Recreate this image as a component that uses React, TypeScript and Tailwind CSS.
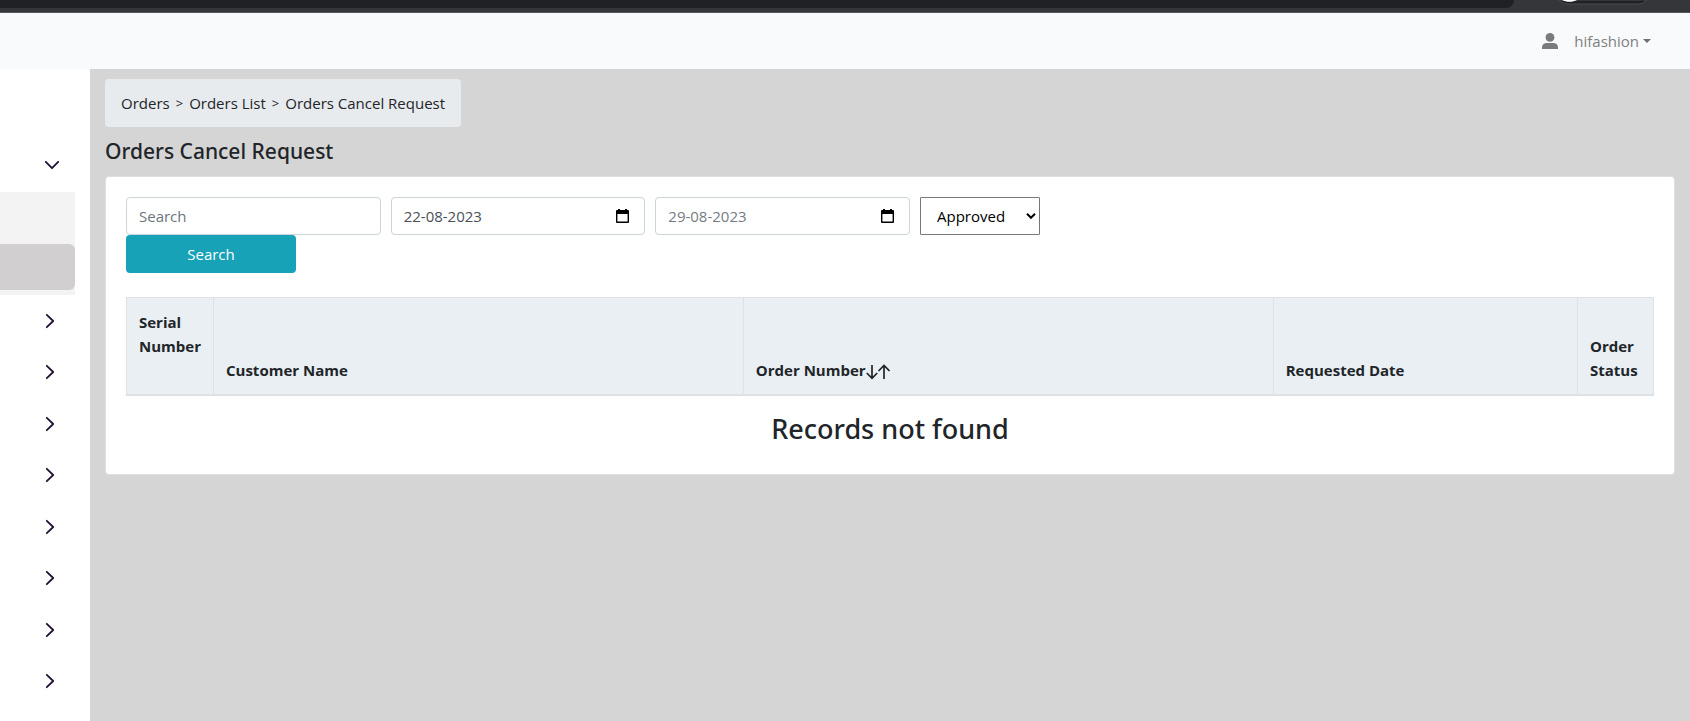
import { useState } from "react"
import { clsx } from "clsx"

const menuGroups = ["Products", "Customers", "Payments", "Shipping", "Coupons", "Reports", "Content", "Settings"]

const inputClass =
  "h-[38px] w-full rounded border border-[#ced4da] bg-white px-3 text-[15px] leading-6 outline-none focus:border-[#80bdff]"

function Chevron({ open }: { open?: boolean }) {
  return (
    <svg
      viewBox="0 0 16 16"
      className="h-4 w-4"
      fill="none"
      stroke="#1f1235"
      strokeWidth="1.8"
      strokeLinecap="round"
      strokeLinejoin="round"
      aria-hidden="true"
    >
      {open ? <path d="M1.8 4.8 8 11.2l6.2-6.4" /> : <path d="M4.8 1.8 11.2 8l-6.4 6.2" />}
    </svg>
  )
}

function CalendarIcon() {
  return (
    <svg viewBox="0 0 13 15" className="h-[15px] w-[13px]" aria-hidden="true">
      <path d="M2 0h2v1h5V0h2v1h1a1 1 0 0 1 1 1v11a1 1 0 0 1-1 1H1a1 1 0 0 1-1-1V2a1 1 0 0 1 1-1h1zM1.400 5v7.600h10.200V5z" fill="#000" fillRule="evenodd" />
    </svg>
  )
}

function BrowserEdge() {
  return (
    <div className="flex h-[13px] items-start border-b border-[#57585b] bg-[#35363a]">
      <div className="h-2 flex-1 rounded-br-xl bg-[#202124]" />
      <div className="flex h-1 w-[176px] pl-[45px]">
        <svg viewBox="0 0 90 5" className="h-[5px] w-[90px]" aria-hidden="true">
          <path d="M0 0c3 3 6 4 10 4h68c4 0 7-1 10-4z" fill="#202124" stroke="#4a4b4e" />
          <path d="M3 0c4 2.400 11 2.400 15 0z" fill="#fff" />
        </svg>
      </div>
    </div>
  )
}

function Navbar() {
  return (
    <header className="flex h-14 items-center justify-end bg-[#f8fafc] pr-[39px]">
      <svg viewBox="0 0 16 16" className="mr-4 h-4 w-4" fill="#7b7b7b" aria-hidden="true">
        <circle cx="8" cy="4.400" r="4.400" />
        <path d="M0 16v-1.500C0 11.500 2 10 5 10h6c3 0 5 1.500 5 4.500V16z" />
      </svg>
      <button type="button" className="flex items-center gap-1 text-[15px] leading-6 text-[#808080]">
        hifashion
        <svg viewBox="0 0 8 4" className="h-1 w-2" fill="#6f6f6f" aria-hidden="true">
          <path d="M0 0h8L4 4z" />
        </svg>
      </button>
    </header>
  )
}

function Sidebar() {
  return (
    <nav className="w-[90px] shrink-0 bg-white pt-[68px] pr-[15px]" aria-label="Main">
      <button type="button" className="flex h-[55px] w-full items-center justify-end pr-[15px]" aria-label="Orders" aria-expanded="true">
        <Chevron open />
      </button>
      <div className="h-[103px] bg-[#f3f3f3] pt-[52px]">
        <a href="#cancel" aria-label="Cancel requests" className="block h-[46px] rounded-r-md bg-[#d1cfd0]" />
      </div>
      <ul className="grid h-[412px] auto-rows-fr">
        {menuGroups.map((group) => (
          <li key={group} className="flex">
            <button type="button" className="flex w-full items-center justify-end pr-[17px]" aria-label={group} aria-expanded="false">
              <Chevron />
            </button>
          </li>
        ))}
      </ul>
    </nav>
  )
}

function DateField({ label, value, onChange, muted }: { label: string; value: string; onChange: (v: string) => void; muted?: boolean }) {
  return (
    <div className="relative w-1/6">
      <input
        type="text"
        aria-label={label}
        value={value}
        onChange={(e) => onChange(e.target.value)}
        className={clsx(inputClass, muted ? "text-[#757b82]" : "text-[#495057]")}
      />
      <button type="button" aria-label={`Pick ${label.toLowerCase()}`} className="absolute inset-y-0 right-4 flex items-center">
        <CalendarIcon />
      </button>
    </div>
  )
}

function SortArrows() {
  return (
    <svg viewBox="0 0 24 16" className="inline h-4 w-6 align-middle" fill="none" stroke="#212529" strokeWidth="1.700" aria-hidden="true">
      <path d="M6 1v13.500M.8 9 6 14.300 11.200 9M18 15V1.500M12.500 7 18 1.500 23.500 7" />
    </svg>
  )
}

export default function App() {
  const [search, setSearch] = useState("")
  const [from, setFrom] = useState("22-08-2023")
  const [to, setTo] = useState("29-08-2023")
  const [status, setStatus] = useState("Approved")

  const thClass = "border border-b-2 border-[#dee2e6] p-3 align-bottom font-bold"
  const headingClass = "font-['Noto_Sans','Open_Sans',sans-serif] font-medium"

  return (
    <div className="flex min-h-screen flex-col bg-[#d5d5d5] font-['Open_Sans','Noto_Sans',sans-serif] text-[15px] leading-6 text-[#212529]">
      <BrowserEdge />
      <Navbar />
      <div className="flex flex-1">
        <Sidebar />
        <main className="min-w-0 flex-1 px-[15px] pt-[10px]">
          <nav aria-label="Breadcrumb" className="flex h-12 w-fit items-center gap-[6px] rounded bg-[#e8ebee] px-4">
            <a href="#orders">Orders</a>
            <span className="text-[13px]">&gt;</span>
            <a href="#list">Orders List</a>
            <span className="text-[13px]">&gt;</span>
            <a href="#cancel">Orders Cancel Request</a>
          </nav>
          <h1 className={clsx(headingClass, "my-[10px] text-[21px] leading-[29px]")}>Orders Cancel Request</h1>

          <section className="rounded border border-[#dfdfdf] bg-white px-5 pt-5 pb-7">
            <form onSubmit={(e) => e.preventDefault()}>
              <div className="flex gap-[10px]">
                <div className="w-1/6">
                  <input
                    type="text"
                    aria-label="Search"
                    placeholder="Search"
                    value={search}
                    onChange={(e) => setSearch(e.target.value)}
                    className={clsx(inputClass, "placeholder:text-[#6c757d]")}
                  />
                </div>
                <DateField label="From date" value={from} onChange={setFrom} />
                <DateField label="To date" value={to} onChange={setTo} muted />
                <div className="relative w-[120px]">
                  <select
                    aria-label="Status"
                    value={status}
                    onChange={(e) => setStatus(e.target.value)}
                    className="h-[38px] w-full appearance-none rounded-[1px] border border-[#767676] bg-white pl-4 text-[15px] text-black"
                  >
                    <option>Approved</option>
                    <option>Pending</option>
                    <option>Rejected</option>
                  </select>
                  <svg viewBox="0 0 10 6" className="pointer-events-none absolute top-4 right-1 h-[6px] w-[10px]" fill="none" stroke="#000" strokeWidth="2" aria-hidden="true">
                    <path d="M1 .8 5 4.800 9 .8" />
                  </svg>
                </div>
              </div>
              <button type="submit" className="h-[38px] w-[170px] rounded bg-[#17a2b8] text-[15px] text-white">
                Search
              </button>
            </form>

            <table className="mt-6 w-full table-fixed border-collapse text-left">
              <thead className="bg-[#e9eff2]">
                <tr>
                  <th className={clsx(thClass, "w-[87px]")}>
                    <div className="pb-6">Serial Number</div>
                  </th>
                  <th className={clsx(thClass, "w-[34.7%]")}>Customer Name</th>
                  <th className={clsx(thClass, "w-[34.7%]")}>
                    <button type="button" className="font-bold">
                      Order Number
                      <SortArrows />
                    </button>
                  </th>
                  <th className={thClass}>Requested Date</th>
                  <th className={clsx(thClass, "w-[76px]")}>Order Status</th>
                </tr>
              </thead>
            </table>
            <h2 className={clsx(headingClass, "mt-4 text-center text-[27px] leading-[34px]")}>Records not found</h2>
          </section>
        </main>
      </div>
    </div>
  )
}
